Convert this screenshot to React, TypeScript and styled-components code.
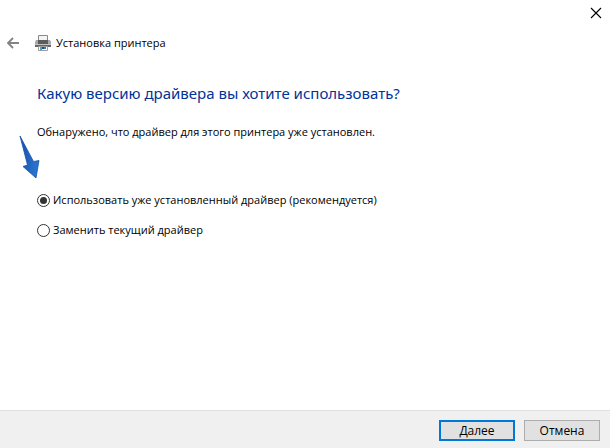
import React, { useState } from "react";
import styled, { createGlobalStyle } from "styled-components";

const GlobalStyle = createGlobalStyle`
  *, *::before, *::after { box-sizing: border-box; }
  body {
    margin: 0;
    background: #ffffff;
    color: #000000;
    font: 11px/16px "Open Sans", "Noto Sans", sans-serif;
  }
`;

const Wizard = styled.form`
  display: flex;
  flex-direction: column;
  min-height: 100vh;
`;

const TitleBar = styled.div`
  display: flex;
  justify-content: flex-end;
  padding: 6px 7px 0 0;
`;

const IconButton = styled.button`
  display: flex;
  padding: 0;
  border: 0;
  background: none;
`;

const Header = styled.header`
  display: flex;
  align-items: center;
  padding: 15px 6px 0;
`;

const Caption = styled.div`
  display: flex;
  align-items: center;
  gap: 5px;
  margin-left: 14px;
`;

const Content = styled.main`
  flex: 1;
  padding: 30px 37px;
`;

const Heading = styled.h1`
  margin: 0;
  color: #003399;
  font-family: "Noto Sans", sans-serif;
  font-size: 15px;
  font-weight: 400;
  line-height: 24px;
`;

const Message = styled.p`
  margin: 19px 0 0;
`;

const Options = styled.fieldset`
  display: flex;
  flex-direction: column;
  align-items: flex-start;
  gap: 14px;
  margin: 52px 0 0;
  padding: 0;
  border: 0;
`;

const Option = styled.label`
  position: relative;
  display: flex;
  align-items: center;
  gap: 3px;
`;

const Radio = styled.input`
  appearance: none;
  display: grid;
  place-items: center;
  width: 13px;
  height: 13px;
  margin: 0;
  border: 1px solid #333333;
  border-radius: 50%;
  background: #ffffff;

  &:checked::before {
    content: "";
    width: 7px;
    height: 7px;
    border-radius: 50%;
    background: #333333;
  }
`;

const Pointer = styled.svg`
  position: absolute;
  right: 100%;
  bottom: 100%;
  margin: 0 -4px 12px 0;
  pointer-events: none;
`;

const Footer = styled.footer`
  display: flex;
  justify-content: flex-end;
  gap: 9px;
  padding: 9px 10px 7px;
  border-top: 1px solid #dfdfdf;
  background: #f0f0f0;
`;

const Button = styled.button<{ $primary?: boolean }>`
  width: 76px;
  height: 21px;
  padding: 0;
  border: ${(p) => (p.$primary ? "2px solid #0078d7" : "1px solid #adadad")};
  background: #e1e1e1;
  color: inherit;
  font: inherit;
  font-size: 12px;
`;

const CloseIcon = () => (
  <svg width="14" height="14" viewBox="0 0 14 14" fill="none" stroke="#000" strokeWidth="1.1">
    <path d="M2 2l10 10M12 2L2 12" />
  </svg>
);

const BackIcon = () => (
  <svg width="15" height="14" viewBox="0 0 15 14" fill="none" stroke="#838383" strokeWidth="1.8">
    <path d="M13 7H2M7 2L2 7l5 5" />
  </svg>
);

const PrinterIcon = () => (
  <svg width="16" height="16" viewBox="0 0 16 16">
    <path d="M3.5 .5h9V6h-9z" fill="#f4f4f4" stroke="#8a8a8a" />
    <path d="M1 5h2v1h10V5h2l1 2v5H0V7z" fill="#a8a8a8" />
    <path d="M3 5h10v4H3z" fill="#5c5c5c" />
    <path d="M0 9h16v1H0z" fill="#c4c4c4" />
    <path d="M0 10h16v2H0z" fill="#666666" />
    <path d="M3.5 11.5h9v4h-9z" fill="#ffffff" stroke="#9a9a9a" />
    <path d="M5 12h2v3H5z" fill="#49a8aa" />
    <path d="M7 12h2v2H7z" fill="#164f9c" />
    <path d="M9 12h2v2H9z" fill="#2b7cc4" />
  </svg>
);

const choices = [
  { id: "keep", label: "Использовать уже установленный драйвер (рекомендуется)" },
  { id: "replace", label: "Заменить текущий драйвер" },
];

export default function App() {
  const [choice, setChoice] = useState("keep");
  return (
    <Wizard onSubmit={(e: React.FormEvent) => e.preventDefault()}>
      <GlobalStyle />
      <TitleBar>
        <IconButton type="button" aria-label="Закрыть"><CloseIcon /></IconButton>
      </TitleBar>
      <Header>
        <IconButton type="button" aria-label="Назад"><BackIcon /></IconButton>
        <Caption><PrinterIcon />Установка принтера</Caption>
      </Header>
      <Content>
        <Heading>Какую версию драйвера вы хотите использовать?</Heading>
        <Message>Обнаружено, что драйвер для этого принтера уже установлен.</Message>
        <Options aria-label="Версия драйвера">
          {choices.map(({ id, label }) => (
            <Option key={id}>
              <Radio type="radio" name="driver" checked={choice === id} onChange={() => setChoice(id)} />
              {label}
              {id === "keep" && (
                <Pointer width="22" height="45" viewBox="0 0 22 45" aria-hidden="true">
                  <defs>
                    <linearGradient id="pointerFill" x1="0" y1="0" x2="1" y2="0.3">
                      <stop offset="0" stopColor="#1350a8" />
                      <stop offset="1" stopColor="#2a72d0" />
                    </linearGradient>
                  </defs>
                  <path
                    d="M1 1L14.5 26.5L20 25.5L17 43L4 31.5L8.5 30Z"
                    fill="url(#pointerFill)"
                    stroke="#1553a6"
                    strokeWidth="0.8"
                    strokeLinejoin="round"
                  />
                </Pointer>
              )}
            </Option>
          ))}
        </Options>
      </Content>
      <Footer>
        <Button type="submit" $primary>Далее</Button>
        <Button type="button">Отмена</Button>
      </Footer>
    </Wizard>
  );
}
